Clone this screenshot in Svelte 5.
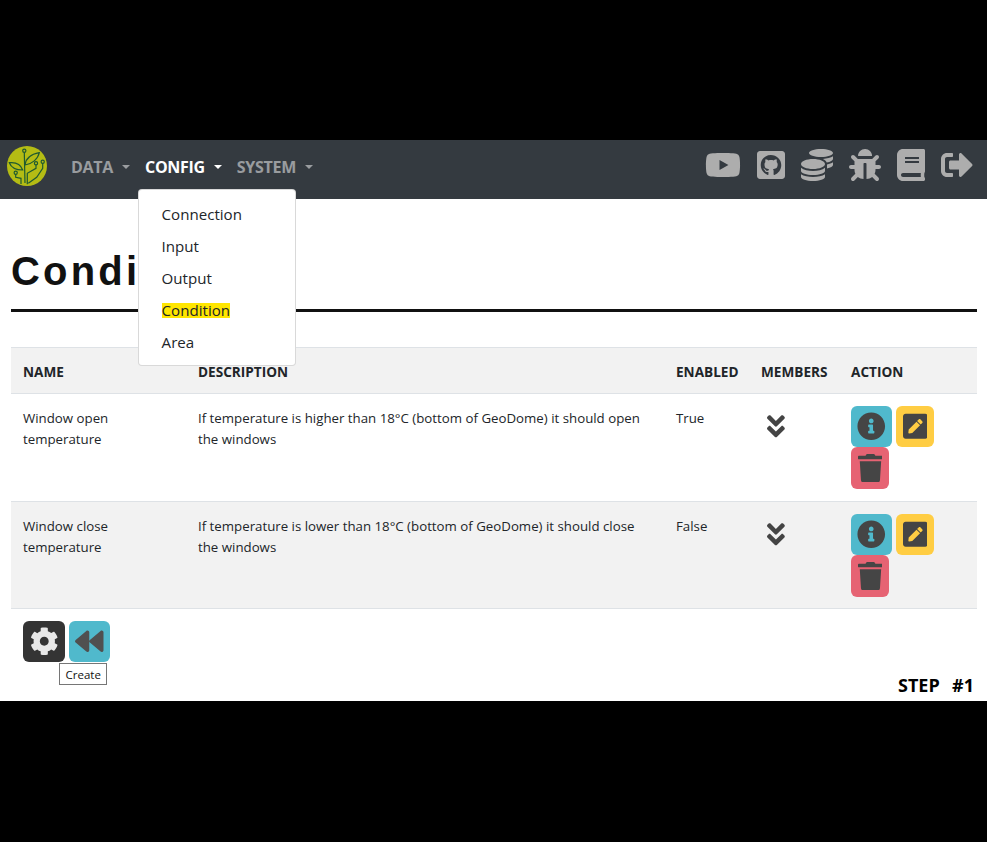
<script>
  const navItems = [
    { label: 'DATA', active: false },
    { label: 'CONFIG', active: true },
    { label: 'SYSTEM', active: false }
  ];
  const menu = ['Connection', 'Input', 'Output', 'Condition', 'Area'];
  const conditions = [
    {
      name: 'Window open temperature',
      description: 'If temperature is higher than 18°C (bottom of GeoDome) it should open the windows',
      enabled: 'True'
    },
    {
      name: 'Window close temperature',
      description: 'If temperature is lower than 18°C (bottom of GeoDome) it should close the windows',
      enabled: 'False'
    }
  ];
</script>

<div class="page">
  <nav class="navbar">
    <svg class="logo" viewBox="0 0 40 40">
      <circle cx="20" cy="20" r="20" fill="#b4bc14" />
      <g fill="none" stroke="#1f5a30" stroke-width="1.2">
        <path d="M17.3 6.4L18 37" />
        <path d="M18 19c1-8 7-11 14.3-12.3C31 13 25 18 18 19z" />
        <path d="M15.7 24C14 19 9 16 2.3 16.7 4 21 9 24 15.7 24z" />
        <path d="M20.3 38.3V27.3L29 22.3v-3.4" />
        <path d="M21.3 37.3L29.7 31.3 35.7 22.3v-5" />
        <path d="M8.7 28.3v3L14 32.3V38" />
        <circle cx="17.3" cy="4.7" r="1.6" />
        <circle cx="29" cy="17.3" r="1.6" />
        <circle cx="35.7" cy="15.7" r="1.6" />
        <circle cx="8.7" cy="26.7" r="1.6" />
      </g>
    </svg>
    <ul class="nav-links">
      {#each navItems as item}
        <li class="nav-item" class:active={item.active}>
          <span class="nav-link">{item.label}<i class="caret"></i></span>
          {#if item.active}
            <div class="dropdown">
              {#each menu as entry}
                <div class="dropdown-item"><span class:highlight={entry === 'Condition'}>{entry}</span></div>
              {/each}
            </div>
          {/if}
        </li>
      {/each}
    </ul>
    <div class="nav-icons">
      <svg viewBox="0 0 576 512"><path d="M549.655 124.083c-6.281-23.65-24.787-42.276-48.284-48.597C458.781 64 288 64 288 64S117.22 64 74.629 75.486c-23.497 6.322-42.003 24.947-48.284 48.597-11.412 42.867-11.412 132.305-11.412 132.305s0 89.438 11.412 132.305c6.281 23.65 24.787 41.5 48.284 47.821C117.22 448 288 448 288 448s170.78 0 213.371-11.486c23.497-6.321 42.003-24.171 48.284-47.821 11.412-42.867 11.412-132.305 11.412-132.305s0-89.438-11.412-132.305zm-317.51 213.508V175.185l142.739 81.205-142.739 81.201z" /></svg>
      <svg viewBox="0 0 448 512"><path d="M400 32H48C21.5 32 0 53.5 0 80v352c0 26.5 21.5 48 48 48h352c26.5 0 48-21.5 48-48V80c0-26.5-21.5-48-48-48zM277.3 415.7c-8.4 1.5-11.5-3.7-11.5-8 0-5.4.2-33 .2-55.3 0-15.6-5.2-25.5-11.3-30.7 37-4.1 76-9.2 76-73.1 0-18.2-6.5-27.3-17.1-39 1.7-4.3 7.4-22-1.7-45-13.9-4.3-45.7 17.9-45.7 17.9-13.2-3.7-27.5-5.6-41.6-5.6-14.1 0-28.4 1.9-41.6 5.6 0 0-31.8-22.2-45.7-17.9-9.1 22.9-3.5 40.6-1.7 45-10.6 11.7-15.6 20.8-15.6 39 0 63.6 37.3 69 74.3 73.1-4.8 4.3-9.1 11.7-10.6 22.3-9.5 4.3-33.8 11.7-48.3-13.9-9.1-15.8-25.5-17.1-25.5-17.1-16.2-.2-1.1 10.2-1.1 10.2 10.8 5 18.4 24.2 18.4 24.2 9.7 29.7 56.1 19.7 56.1 19.7 0 13.9.2 36.5.2 40.6 0 4.3-3 9.5-11.5 8-66-22.1-112.2-84.9-112.2-158.3 0-91.8 70.2-161.5 162-161.5S388 165.6 388 257.4c.1 73.4-44.7 136.3-110.7 158.3z" /></svg>
      <svg viewBox="0 0 512 512"><path d="M0 405.3V448c0 35.3 86 64 192 64s192-28.7 192-64v-42.7C342.7 434.4 267.2 448 192 448S41.3 434.4 0 405.3zM320 128c106 0 192-28.7 192-64S426 0 320 0 128 28.7 128 64s86 64 192 64zM0 300.4V352c0 35.3 86 64 192 64s192-28.7 192-64v-51.6c-41.3 34-116.9 51.6-192 51.6S41.3 334.4 0 300.4zm416 11c57.3-11.1 96-31.7 96-55.4v-42.7c-23.2 16.4-57.3 27.6-96 34.5v63.6zM192 160C86 160 0 195.8 0 240s86 80 192 80 192-35.8 192-80-86-80-192-80zm219.3 56.3c60-10.8 100.7-32 100.7-56.3v-42.7c-35.5 25.1-96.5 38.6-160.7 41.8 29.5 14.3 51.2 33.5 60 57.2z" /></svg>
      <svg viewBox="0 0 512 512"><path d="M511.988 288.9c-.478 17.43-15.217 31.1-32.653 31.1H424v16c0 21.864-4.882 42.584-13.6 61.145l60.228 60.228c12.496 12.497 12.496 32.758 0 45.255-12.498 12.497-32.759 12.496-45.256 0l-54.736-54.736C345.886 467.965 314.351 480 280 480V236c0-6.627-5.373-12-12-12h-24c-6.627 0-12 5.373-12 12v244c-34.351 0-65.886-12.035-90.636-32.108l-54.736 54.736c-12.498 12.497-32.759 12.496-45.256 0-12.496-12.497-12.496-32.758 0-45.255l60.228-60.228C92.882 378.584 88 357.864 88 336v-16H32.666C15.23 320 .491 306.33.013 288.9-.484 270.816 14.028 256 32 256h56v-58.745l-46.628-46.628c-12.496-12.497-12.496-32.758 0-45.255 12.498-12.497 32.758-12.497 45.256 0L141.255 160h229.489l54.627-54.627c12.498-12.497 32.758-12.497 45.256 0 12.496 12.497 12.496 32.758 0 45.255L424 197.255V256h56c17.972 0 32.484 14.816 31.988 32.9zM257 0c-61.856 0-112 50.144-112 112h224C369 50.144 318.856 0 257 0z" /></svg>
      <svg viewBox="0 0 448 512"><path d="M448 360V24c0-13.3-10.7-24-24-24H96C43 0 0 43 0 96v320c0 53 43 96 96 96h328c13.3 0 24-10.7 24-24v-16c0-7.5-3.5-14.3-8.9-18.7-4.2-15.4-4.2-59.3 0-74.7 5.4-4.3 8.9-11.1 8.9-18.6zM128 134c0-3.3 2.7-6 6-6h212c3.3 0 6 2.7 6 6v20c0 3.3-2.7 6-6 6H134c-3.3 0-6-2.7-6-6v-20zm0 64c0-3.3 2.7-6 6-6h212c3.3 0 6 2.7 6 6v20c0 3.3-2.7 6-6 6H134c-3.3 0-6-2.7-6-6v-20zm253.4 250H96c-17.7 0-32-14.3-32-32 0-17.6 14.4-32 32-32h285.4c-1.9 17.1-1.9 46.9 0 64z" /></svg>
      <svg viewBox="0 0 512 512"><path d="M497 273L329 441c-15 15-41 4.5-41-17v-96H152c-13.3 0-24-10.7-24-24v-96c0-13.3 10.7-24 24-24h136V88c0-21.4 25.9-32 41-17l168 168c9.3 9.4 9.3 24.6 0 34zM192 436v-40c0-6.6-5.4-12-12-12H96c-17.7 0-32-14.3-32-32V160c0-17.7 14.3-32 32-32h84c6.6 0 12-5.4 12-12V76c0-6.6-5.4-12-12-12H96c-53 0-96 43-96 96v192c0 53 43 96 96 96h84c6.6 0 12-5.4 12-12z" /></svg>
    </div>
  </nav>

  <main class="content">
    <h1>Conditions</h1>
    <table>
      <thead>
        <tr>
          <th class="col-name">NAME</th>
          <th class="col-desc">DESCRIPTION</th>
          <th class="col-enabled">ENABLED</th>
          <th class="col-members">MEMBERS</th>
          <th class="col-action">ACTION</th>
        </tr>
      </thead>
      <tbody>
        {#each conditions as row}
          <tr>
            <td class="text-cell">{row.name}</td>
            <td class="text-cell">{row.description}</td>
            <td class="text-cell">{row.enabled}</td>
            <td>
              <svg class="members-icon" viewBox="0 0 320 512"><path d="M143 256.3L7 120.3c-9.4-9.4-9.4-24.6 0-33.9l22.6-22.6c9.4-9.4 24.6-9.4 33.9 0l96.4 96.4 96.4-96.4c9.4-9.4 24.6-9.4 33.9 0L313 86.3c9.4 9.4 9.4 24.6 0 33.9l-136 136c-9.4 9.5-24.6 9.5-34 .1zm34 192l136-136c9.4-9.4 9.4-24.6 0-33.9l-22.6-22.6c-9.4-9.4-24.6-9.4-33.9 0L160 352.1l-96.4-96.4c-9.4-9.4-24.6-9.4-33.9 0L7 278.3c-9.4 9.4-9.4 24.6 0 33.9l136 136c9.4 9.5 24.6 9.5 34 .1z" /></svg>
            </td>
            <td>
              <div class="actions">
                <button class="btn info" aria-label="Info">
                  <svg viewBox="0 0 512 512"><path d="M256 8C119.043 8 8 119.083 8 256c0 136.997 111.043 248 248 248s248-111.003 248-248C504 119.083 392.957 8 256 8zm0 110c23.196 0 42 18.804 42 42s-18.804 42-42 42-42-18.804-42-42 18.804-42 42-42zm56 254c0 6.627-5.373 12-12 12h-88c-6.627 0-12-5.373-12-12v-24c0-6.627 5.373-12 12-12h12v-64h-12c-6.627 0-12-5.373-12-12v-24c0-6.627 5.373-12 12-12h64c6.627 0 12 5.373 12 12v100h12c6.627 0 12 5.373 12 12v24z" /></svg>
                </button>
                <button class="btn edit" aria-label="Edit">
                  <svg viewBox="0 0 448 512"><path d="M400 480H48c-26.5 0-48-21.5-48-48V80c0-26.5 21.5-48 48-48h352c26.5 0 48 21.5 48 48v352c0 26.5-21.5 48-48 48zM238.1 177.9L102.4 313.6l-6.3 57.1c-.8 7.6 5.6 14.1 13.3 13.3l57.1-6.3L302.2 242c2.3-2.3 2.3-6.1 0-8.5L246.7 178c-2.5-2.4-6.3-2.4-8.6-.1zM345 165.1L314.9 135c-9.4-9.4-24.6-9.4-33.9 0l-23.1 23.1c-2.3 2.3-2.3 6.1 0 8.5l55.5 55.5c2.3 2.3 6.1 2.3 8.5 0L345 199c9.3-9.3 9.3-24.5 0-33.9z" /></svg>
                </button>
                <button class="btn trash" aria-label="Delete">
                  <svg viewBox="0 0 448 512"><path d="M432 32H312l-9.4-18.7A24 24 0 0 0 281.1 0H166.8a23.72 23.72 0 0 0-21.4 13.3L136 32H16A16 16 0 0 0 0 48v32a16 16 0 0 0 16 16h416a16 16 0 0 0 16-16V48a16 16 0 0 0-16-16zM53.2 467a48 48 0 0 0 47.9 45h245.8a48 48 0 0 0 47.9-45L416 128H32z" /></svg>
                </button>
              </div>
            </td>
          </tr>
        {/each}
      </tbody>
    </table>

    <div class="footer">
      <div class="footer-buttons">
        <button class="btn create" aria-label="Create">
          <svg viewBox="0 0 512 512"><path d="M487.4 315.7l-42.6-24.6c4.3-23.2 4.3-47 0-70.2l42.6-24.6c4.9-2.8 7.1-8.6 5.5-14-11.1-35.6-30-67.8-54.7-94.6-3.8-4.1-10-5.1-14.8-2.3L380.8 110c-17.9-15.4-38.5-27.3-60.8-35.1V25.8c0-5.6-3.9-10.5-9.4-11.7-36.7-8.2-74.3-7.8-109.2 0-5.5 1.2-9.4 6.1-9.4 11.7V75c-22.2 7.9-42.8 19.8-60.8 35.1L88.7 85.5c-4.9-2.8-11-1.9-14.8 2.3-24.7 26.7-43.6 58.9-54.7 94.6-1.7 5.4.6 11.2 5.5 14L67.3 221c-4.3 23.2-4.3 47 0 70.2l-42.6 24.6c-4.9 2.8-7.1 8.6-5.5 14 11.1 35.6 30 67.8 54.7 94.6 3.8 4.1 10 5.1 14.8 2.3l42.6-24.6c17.9 15.4 38.5 27.3 60.8 35.1v49.2c0 5.6 3.9 10.5 9.4 11.7 36.7 8.2 74.3 7.8 109.2 0 5.5-1.2 9.4-6.1 9.4-11.7v-49.2c22.2-7.9 42.8-19.8 60.8-35.1l42.6 24.6c4.9 2.8 11 1.9 14.8-2.3 24.7-26.7 43.6-58.9 54.7-94.6 1.5-5.5-.7-11.3-5.6-14.1zM256 336c-44.1 0-80-35.9-80-80s35.9-80 80-80 80 35.9 80 80-35.9 80-80 80z" /></svg>
        </button>
        <button class="btn back" aria-label="Back">
          <svg viewBox="0 0 512 512"><path d="M11.5 280.6l192 160c20.6 17.2 52.5 2.8 52.5-24.6V96c0-27.4-31.9-41.8-52.5-24.6l-192 160c-15.3 12.8-15.3 36.4 0 49.2zm256 0l192 160c20.6 17.2 52.5 2.8 52.5-24.6V96c0-27.4-31.9-41.8-52.5-24.6l-192 160c-15.3 12.8-15.3 36.4 0 49.2z" /></svg>
          <span class="tooltip">Create</span>
        </button>
      </div>
      <div class="step">STEP&nbsp; #1</div>
    </div>
  </main>
</div>

<style>
  :global(body) {
    background: #000;
    font-family: "Open Sans", "Noto Sans", sans-serif;
  }

  .page {
    display: flex;
    flex-direction: column;
    margin-top: 140px;
    height: 561px;
    background: #fff;
    color: #212529;
    overflow: hidden;
    font-family: "Open Sans", "Noto Sans", sans-serif;
  }

  .navbar {
    display: flex;
    align-items: center;
    flex: none;
    height: 59px;
    background: #343a40;
    padding: 0 14px 0 7px;
  }

  .logo {
    width: 40px;
    height: 40px;
    margin-top: -7px;
    flex: none;
  }

  .nav-links {
    display: flex;
    list-style: none;
    margin: -5px 0 0 24px;
    padding: 0;
  }

  .nav-item {
    position: relative;
    margin-right: 15px;
  }

  .nav-link {
    display: flex;
    align-items: center;
    font-size: 16px;
    font-weight: 700;
    letter-spacing: -0.3px;
    color: rgba(255, 255, 255, .5);
  }

  .active .nav-link {
    color: #fff;
  }

  .caret {
    width: 0;
    height: 0;
    margin-left: 9px;
    border-top: 4.8px solid currentColor;
    border-left: 4.8px solid transparent;
    border-right: 4.8px solid transparent;
  }

  .dropdown {
    position: absolute;
    top: 32.5px;
    left: -7.4px;
    width: 158px;
    height: 177px;
    box-sizing: border-box;
    padding: 8px 0;
    background: #fff;
    border: 1px solid rgba(0, 0, 0, .15);
    border-radius: 4px;
    z-index: 5;
  }

  .dropdown-item {
    height: 32px;
    line-height: 32px;
    padding: 0 23px;
    font-size: 15.1px;
    color: #212529;
  }

  .highlight {
    display: inline-block;
    line-height: 15px;
    background: #ffe600;
  }

  .nav-icons {
    display: flex;
    gap: 16px;
    margin-left: auto;
    margin-top: -9px;
  }

  .nav-icons svg {
    height: 32px;
    display: block;
    fill: #adadad;
  }

  .content {
    display: flex;
    flex-direction: column;
    flex: 1;
    padding: 0 10px 0 11px;
  }

  h1 {
    margin: 0;
    padding: 48px 0 14px;
    font-family: "Liberation Sans", Arial, sans-serif;
    font-size: 40px;
    line-height: 48px;
    font-weight: 700;
    letter-spacing: 3.2px;
    color: #111;
    border-bottom: 3px solid #111;
  }

  table {
    width: 100%;
    margin-top: 35px;
    border-collapse: collapse;
    table-layout: fixed;
    font-size: 13.28px;
    line-height: 21.6px;
  }

  th, td {
    padding: 12px 12px 11px;
    text-align: left;
    vertical-align: top;
    border-top: 1px solid #dee2e6;
  }

  th {
    font-weight: 700;
    font-size: 13.6px;
    padding: 13px 12px 10.5px;
    line-height: 21px;
    background: #f2f2f2;
    color: #212529;
    border-bottom: 1px solid #dee2e6;
  }

  td.text-cell {
    padding-top: 14px;
  }

  tbody tr:first-child td {
    padding-bottom: 12px;
  }

  tbody tr:nth-child(2) td {
    background: #f2f2f2;
  }

  tbody tr:last-child td {
    border-bottom: 1px solid #dee2e6;
  }

  .col-name { width: 151px; }
  .col-desc { width: 454px; }
  .col-enabled { width: 61px; }
  .col-members { width: 66px; }

  .members-icon {
    display: block;
    height: 28.5px;
    margin: 6px 0 0 6px;
    fill: #444;
  }

  .actions {
    display: flex;
    flex-wrap: wrap;
    gap: 0 4px;
  }

  .btn {
    display: flex;
    align-items: center;
    justify-content: center;
    padding: 0;
    border: none;
    border-radius: 6px;
    height: 41.5px;
    fill: #454545;
    font-family: inherit;
  }

  .btn svg {
    display: block;
    height: 28.5px;
  }

  .info { width: 41px; background: #50b9cc; }
  .edit { width: 38px; background: #ffcd43; }
  .trash { width: 38px; background: #e66373; }

  .footer {
    display: flex;
    flex: 1;
    justify-content: space-between;
    padding: 12px 3px 4px 12px;
  }

  .footer-buttons {
    display: flex;
    align-self: flex-start;
    gap: 4px;
  }

  .create { width: 42px; background: #343434; fill: #e8e8e8; }
  .back { width: 41px; background: #50b9cc; position: relative; fill: #505050; }

  .tooltip {
    position: absolute;
    top: 42px;
    left: -10px;
    padding: 3px 5.5px 1px;
    background: #fff;
    border: 1px solid #767676;
    font-size: 11.5px;
    line-height: 16px;
    color: #111;
  }

  .step {
    align-self: flex-end;
    font-size: 18px;
    word-spacing: 1.5px;
    line-height: 24px;
    font-weight: 700;
    color: #000;
  }
</style>
